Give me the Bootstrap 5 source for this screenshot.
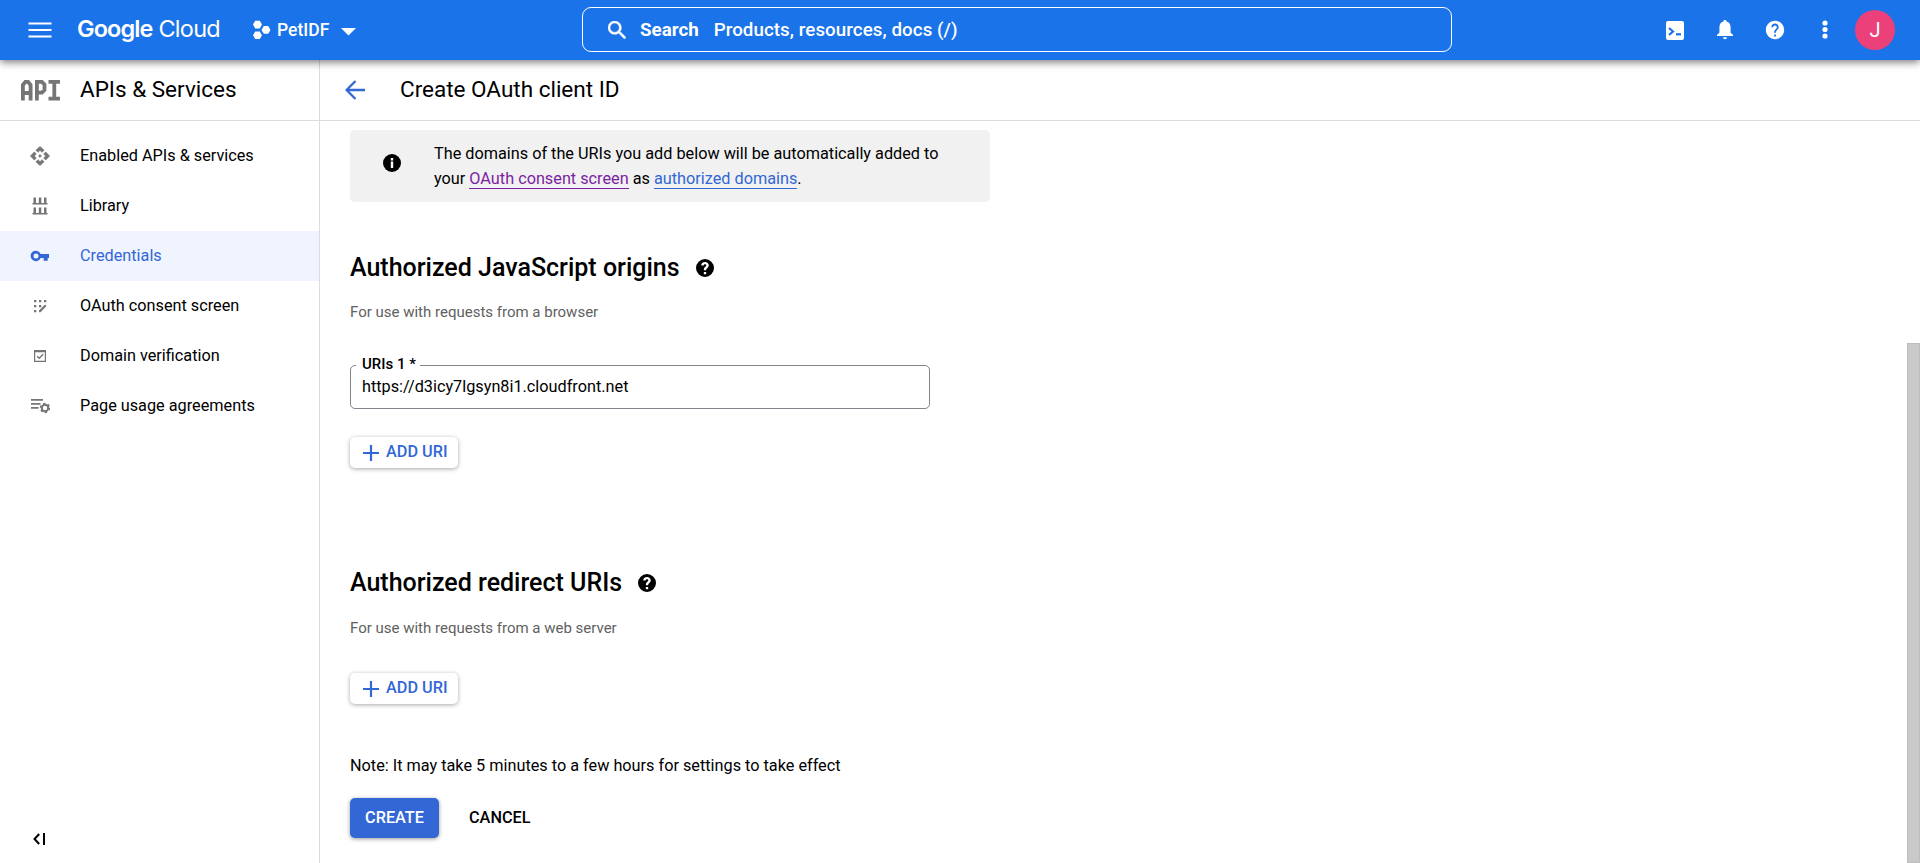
<!DOCTYPE html>
<html lang="en">
<head>
<meta charset="utf-8">
<meta name="viewport" content="width=device-width, initial-scale=1">
<title>Create OAuth client ID</title>
<link href="https://cdn.jsdelivr.net/npm/bootstrap@5.3.0/dist/css/bootstrap.min.css" rel="stylesheet">
<style>
body{font-family:Roboto,"Liberation Sans",sans-serif;font-size:16.25px;line-height:25px;color:#000;background:#fff;height:100vh;overflow:hidden}
svg{display:block;flex:none}
.topbar{height:60px;background:#1a73e8;color:#fff;box-shadow:0 2px 8px rgba(0,0,0,.55);z-index:5;padding:0 25px 0 25px}
.brand{font-family:Inter,Roboto,sans-serif;font-size:23.5px;letter-spacing:-.75px;width:145px;margin-left:22px;margin-top:-3px;white-space:nowrap;line-height:30px}
.brand span{font-weight:600;letter-spacing:-.9px}
.project{font-size:17.5px;font-weight:500;margin-top:1px}
.searchbox{width:870px;height:45px;border:1px solid #fff;border-radius:9px;font-size:18.75px;font-weight:500;margin-top:-1px}
.searchbox b,.searchbox span{padding-top:1px}
.avatar-dot{width:40px;height:40px;background:#ec407a;font-size:20px}
.side{width:320px;border-right:1px solid #dadce0}
.bar2{height:61px;border-bottom:1px solid #dadce0;font-size:22.5px;padding-bottom:1px}
.side .nav-link{height:50px;padding:0 0 1px 25px;gap:25px;color:#000;border-radius:0}
.side .nav-link svg{width:30px;height:30px;fill:#757575;padding:5px}
.side .nav-link.active{background:#eff4fe;color:#3367d6}
.side .nav-link.active svg{fill:#3367d6}
.notice{width:640px;height:72px;background:#f1f1f1;border-radius:5px;margin-top:9px}
.lnk{color:#3367d6;text-decoration:none;border-bottom:1px solid}
.lnk.seen{color:#7b1fa2}
h2{font-size:25px;font-weight:500;line-height:32px;margin:0}
.hint{font-size:15px;color:#616161}
.uri{width:580px;height:44px;border:1px solid #80868b;border-radius:5px;padding:8px 11px}
.uri label{left:5px;top:-14px;padding:0 4px 0 6px;background:#fff;font-size:15px;font-weight:500}
.uri input{border:0;padding:0;width:100%;outline:0;line-height:25px;height:25px;display:block}
.btn-add{height:31px;width:108px;border-radius:5px;color:#3367d6;font-weight:500;border:0;padding:0 0 0 13px;font-size:16.25px;box-shadow:0 1px 4px rgba(0,0,0,.35)}
.btn-make{height:40px;width:89px;border-radius:5px;background:#3367d6;color:#fff;font-weight:500;border:0;padding:0;font-size:16.25px;box-shadow:0 1px 4px rgba(0,0,0,.4)}
.btn-quit{height:40px;font-weight:500;border:0;padding:0;font-size:16.25px;color:#000}
.thumb{width:13px;background:#c9c9c9;border:1px solid #bdbdbd;margin-top:222px}
</style>
</head>
<body class="d-flex flex-column">
<svg class="d-none">
<symbol id="help" viewBox="0 0 24 24"><path d="M12 2C6.480 2 2 6.480 2 12s4.480 10 10 10 10-4.480 10-10S17.520 2 12 2zm1 17h-2v-2h2v2zm2.070-7.750l-.9.920C13.450 12.900 13 13.500 13 15h-2v-.5c0-1.100.450-2.100 1.170-2.830l1.240-1.260c.370-.360.590-.860.590-1.410 0-1.100-.9-2-2-2s-2 .9-2 2H8c0-2.210 1.790-4 4-4s4 1.790 4 4c0 .880-.360 1.680-.930 2.250z"/></symbol>
<symbol id="helpbold" viewBox="0 0 20 20"><path fill-rule="evenodd" d="M10 0a10 10 0 1 0 0 20 10 10 0 0 0 0-20zM8.700 14.500h2.600V17H8.700zM10 3.200c2.400 0 4.200 1.500 4.200 3.700 0 1.500-.8 2.300-1.600 3-.9.7-1.300 1.200-1.300 2.600H8.700c0-2.400.8-3.200 1.700-4 .7-.6 1.100-.9 1.100-1.600 0-.7-.6-1.200-1.500-1.200s-1.500.6-1.500 1.500H5.800C5.800 4.800 7.500 3.200 10 3.200z"/></symbol>
<symbol id="plus" viewBox="0 0 16 16"><path d="M6.900 0h2.200v6.900H16v2.200H9.100V16H6.900V9.100H0V6.900h6.900z"/></symbol>
</svg>

<header class="topbar d-flex align-items-center position-relative flex-shrink-0">
  <svg width="30" height="30" viewBox="0 0 30 30" stroke="#fff" stroke-width="2.200"><path d="M3.500 8.500h23M3.500 15h23M3.500 21.500h23"/></svg>
  <div class="brand"><span>Google</span> Cloud</div>
  <svg style="margin-left:31px" width="18" height="20" viewBox="0 0 18 20" fill="#fff"><path d="M2.200.8h4.600L9 4.600 6.800 8.400H2.200L0 4.600zM2.200 11.400h4.600L9 15.200 6.800 19H2.200L0 15.200zM10.800 6h4.400l2.300 3.900-2.300 3.900h-4.400L8.500 9.900z"/></svg>
  <div class="project" style="margin-left:6px">PetIDF</div>
  <svg style="margin-left:12px;margin-top:3px" width="16" height="8" viewBox="0 0 16 8"><path fill="#fff" d="M0 0h15L7.500 7.500z"/></svg>
  <div class="searchbox d-flex align-items-center position-absolute" style="left:582px">
    <svg width="18" height="18" viewBox="3 3 17.500 17.500" fill="#fff" style="margin-left:25px"><path stroke="#fff" stroke-width=".5" d="M15.500 14h-.790l-.280-.270A6.470 6.470 0 0 0 16 9.500 6.500 6.500 0 1 0 9.500 16c1.610 0 3.090-.590 4.230-1.570l.270.280v.790l5 4.990L20.490 19l-4.990-5zm-6 0C7.010 14 5 11.990 5 9.500S7.010 5 9.500 5 14 7.010 14 9.500 11.990 14 9.500 14z"/></svg>
    <b style="margin-left:14px">Search</b><span style="margin-left:15px;letter-spacing:.06px">Products, resources, docs (/)</span>
  </div>
  <div class="d-flex align-items-center ms-auto">
    <svg width="18" height="19" viewBox="0 0 18 19" style="margin-right:33px"><rect width="18" height="19" rx="2" fill="#fff"/><path d="M3 7l4 3.500L3 14" fill="none" stroke="#1a73e8" stroke-width="2.200"/><path d="M10 13.300h5" stroke="#1a73e8" stroke-width="2.200"/></svg>
    <svg width="16" height="20" viewBox="0 0 16 20" fill="#fff" style="margin-right:31px"><path d="M8 0c1 0 1.600.7 1.600 1.600 2.600.7 4 2.900 4 5.600v5.600L16 14.800V16H0v-1.200l2.400-2V7.200c0-2.700 1.400-4.900 4-5.600C6.400.7 7 0 8 0zM6 17.200h4a2 2 0 0 1-4 0z"/></svg>
    <svg width="22" height="22" fill="#fff" style="margin-right:36px"><use href="#help"/></svg>
    <svg width="6" height="20" viewBox="0 0 6 20" fill="#fff" style="margin-right:27px"><circle cx="3" cy="3" r="2.600"/><circle cx="3" cy="9.500" r="2.600"/><circle cx="3" cy="16" r="2.600"/></svg>
    <div class="avatar-dot rounded-circle d-flex align-items-center justify-content-center">J</div>
  </div>
</header>

<div class="d-flex flex-grow-1">
  <aside class="side d-flex flex-column flex-shrink-0">
    <div class="bar2 d-flex align-items-center">
      <svg width="40" height="21" viewBox="0 0 40 21" style="margin-left:21px;margin-right:19px;margin-top:1px" fill="none" stroke="#757575" stroke-width="3.800"><path d="M1.900 20.500V5l2.500-3.100h2.700L9.600 5v15.500M1.900 13h7.700M15.900 20.500V1.900h5l2.600 2.600v5.500l-2.600 2.600h-5M27.500 1.900H39M33.300 1.900v17M27.500 18.600H39"/></svg>
      <div>APIs &amp; Services</div>
    </div>
    <nav class="nav flex-column" style="margin-top:10px">
      <a class="nav-link d-flex align-items-center"><svg viewBox="1.500 1.500 21 21"><path stroke="#757575" stroke-width=".8" stroke-linejoin="round" d="M13.500 12l-1.500 1.500-1.500-1.500 1.500-1.500 1.500 1.500zm-1.500-6l2.120 2.120 2.100-2.100L12 2 7.780 6.020l2.100 2.100L12 6zm-6 6l2.120-2.120-2.100-2.100L2 12l4.020 4.220 2.100-2.100L6 12zm12 0l-2.120 2.120 2.100 2.100L22 12l-4.020-4.220-2.100 2.100L18 12zm-6 6l-2.120-2.120-2.100 2.100L12 22l4.220-4.020-2.100-2.100L12 18z"/></svg>Enabled APIs &amp; services</a>
      <a class="nav-link d-flex align-items-center"><svg viewBox="0 0 20 20"><path d="M3.500 1.500H6V7h2.800V1.500h2.500V7H14V1.500h2.500V7H17.500v1.500h-15V7h1zM3.500 11.500H6V17h2.800v-5.500h2.500V17H14v-5.500h2.500V17H17.500v1.500h-15V17h1z"/></svg>Library</a>
      <a class="nav-link active d-flex align-items-center"><svg viewBox="0 0 20 20"><path fill-rule="evenodd" d="M10.600 8H19v3.900h-1.300V14.800h-4v-2.900h-3.100A5.200 5.200 0 1 1 10.600 8zM6 7.500a2.500 2.500 0 1 0 0 5 2.500 2.500 0 0 0 0-5z"/></svg>Credentials</a>
      <a class="nav-link d-flex align-items-center"><svg viewBox="0 0 20 20"><path d="M4 4h2.300v2.300H4zM9 4h2.300v2.300H9zM14 4h2.300v2.300h-2.300zM4 9h2.300v2.300H4zM9 9h2.300v2.300H9zM4 14h2.300v2.300H4zM15 8.500l1.500 1.500-6 6.200H9v-1.600z"/></svg>OAuth consent screen</a>
      <a class="nav-link d-flex align-items-center"><svg viewBox="0 0 20 20"><path fill-rule="evenodd" d="M4 4h12v12H4zM5.200 6.200v8.600h9.600V6.200z"/><path d="M7.200 10.300l2 2 4-4" fill="none" stroke="#757575" stroke-width="1.400"/></svg>Domain verification</a>
      <a class="nav-link d-flex align-items-center"><svg viewBox="0 0 20 20"><path d="M1 3h12v1.700H1zM1 7h9.500v1.700H1zM1 11h7.500v1.700H1z"/><circle cx="15" cy="12" r="3.200" fill="none" stroke="#757575" stroke-width="2"/><circle cx="15" cy="12" r="4.400" fill="none" stroke="#757575" stroke-width="1.600" stroke-dasharray="2.300 2.300"/></svg>Page usage agreements</a>
    </nav>
    <svg class="mt-auto" style="margin-left:33px;margin-bottom:18px" width="13" height="12" viewBox="0 0 13 12" fill="none" stroke="#000" stroke-width="2"><path d="M6.200 1L1.500 6l4.700 5M11 0v12"/></svg>
  </aside>

  <main class="flex-grow-1 d-flex flex-column">
    <div class="bar2 d-flex align-items-center">
      <svg width="20" height="20" viewBox="0 0 20 20" style="margin-left:25px;margin-right:35px" fill="none" stroke="#3367d6" stroke-width="2.300"><path d="M20 10H2M10.500 1L1.600 10l8.900 9"/></svg>
      <div>Create OAuth client ID</div>
    </div>
    <div class="d-flex flex-grow-1">
      <div class="flex-grow-1" style="padding-left:30px">
        <div class="notice d-flex">
          <svg width="18" height="18" viewBox="0 0 18 18" style="margin:24px 33px 0 33px"><circle cx="9" cy="9" r="9"/><path d="M7.800 4h2.400v2.400H7.800zM7.800 7.500h2.400V14H7.800z" fill="#fff"/></svg>
          <div style="padding-top:11px">The domains of the URIs you add below will be automatically added to<br>your <a class="lnk seen">OAuth consent screen</a> as <a class="lnk">authorized domains</a>.</div>
        </div>
        <div class="d-flex align-items-center" style="margin-top:50px"><h2>Authorized JavaScript origins</h2><svg width="18" height="18" style="margin-left:16px"><use href="#helpbold"/></svg></div>
        <div class="hint" style="margin-top:16px">For use with requests from a browser</div>
        <div class="uri position-relative" style="margin-top:40px"><label for="uri1" class="position-absolute">URIs 1 *</label><input id="uri1" value="https://d3icy7lgsyn8i1.cloudfront.net"></div>
        <button class="btn btn-add d-flex align-items-center" style="margin-top:28px"><svg style="margin-right:7px" width="16" height="16" fill="#3367d6"><use href="#plus"/></svg>ADD URI</button>
        <div class="d-flex align-items-center" style="margin-top:99px"><h2>Authorized redirect URIs</h2><svg width="18" height="18" style="margin-left:16px"><use href="#helpbold"/></svg></div>
        <div class="hint" style="margin-top:17px">For use with requests from a web server</div>
        <button class="btn btn-add d-flex align-items-center" style="margin-top:32px"><svg style="margin-right:7px" width="16" height="16" fill="#3367d6"><use href="#plus"/></svg>ADD URI</button>
        <div style="margin-top:49px">Note: It may take 5 minutes to a few hours for settings to take effect</div>
        <div class="d-flex" style="margin-top:20px;gap:30px"><button class="btn btn-make">CREATE</button><button class="btn btn-quit">CANCEL</button></div>
      </div>
      <div class="thumb flex-shrink-0"></div>
    </div>
  </main>
</div>
<script src="https://cdn.jsdelivr.net/npm/bootstrap@5.3.0/dist/js/bootstrap.bundle.min.js"></script>
</body>
</html>
